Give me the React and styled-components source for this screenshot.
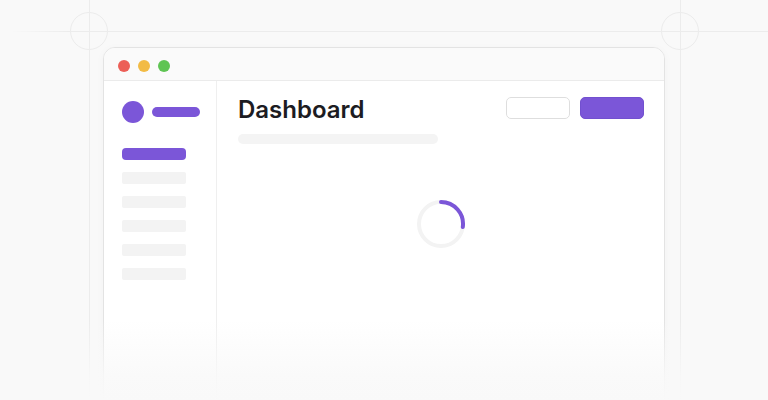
import React from 'react';
import styled, { createGlobalStyle } from 'styled-components';

const GlobalStyle = createGlobalStyle`
  html, body {
    margin: 0;
    padding: 0;
    background: #f9f9f9;
    font-family: 'Inter', 'Liberation Sans', sans-serif;
  }
`;

const Stage = styled.div`
  position: relative;
  width: 768px;
  height: 400px;
  overflow: hidden;
  background: #f9f9f9;
  padding: 47px 0 0 103px;
  box-sizing: border-box;
`;

const GuideV = styled.div`
  position: absolute;
  top: 0;
  left: ${props => props.x}px;
  width: 1px;
  height: 400px;
  background: #ececec;
`;

const GuideH = styled.div`
  position: absolute;
  top: 31px;
  left: 0;
  width: 768px;
  height: 1px;
  background: linear-gradient(to right, rgba(236, 236, 236, 0) 10px, #ececec 70px);
`;

const GuideRing = styled.div`
  position: absolute;
  top: 12px;
  left: ${props => props.x - 19}px;
  width: 38px;
  height: 38px;
  border-radius: 50%;
  border: 1px solid #ececec;
  box-sizing: border-box;
`;

const Window = styled.div`
  position: relative;
  width: 562px;
  height: 420px;
  display: flex;
  flex-direction: column;
  background: #fff;
  border: 1.5px solid #e3e3e3;
  border-radius: 12px;
  box-shadow: 0 2px 10px rgba(0, 0, 0, 0.03);
  box-sizing: border-box;
  overflow: hidden;
`;

const TitleBar = styled.div`
  height: 33px;
  display: flex;
  align-items: center;
  gap: 8px;
  padding: 4px 0 0 14px;
  box-sizing: border-box;
  background: #fafafa;
  border-bottom: 1.5px solid #ebebeb;
`;

const Dot = styled.span`
  width: 12px;
  height: 12px;
  border-radius: 50%;
  background: ${props => props.color};
`;

const Body = styled.div`
  flex: 1;
  display: flex;
`;

const Sidebar = styled.div`
  width: 113px;
  border-right: 1.5px solid #efefef;
  padding: 20px 0 0 18px;
  box-sizing: border-box;
  display: flex;
  flex-direction: column;
`;

const Brand = styled.div`
  display: flex;
  align-items: center;
  gap: 8px;
  margin-bottom: 25px;
`;

const BrandMark = styled.div`
  width: 22px;
  height: 22px;
  border-radius: 50%;
  background: #7b56d8;
`;

const BrandName = styled.div`
  width: 48px;
  height: 10px;
  border-radius: 5px;
  background: #7b56d8;
`;

const NavList = styled.div`
  display: flex;
  flex-direction: column;
  gap: 12px;
`;

const NavItem = styled.div`
  width: 64px;
  height: 12px;
  border-radius: ${props => (props.active ? '4px' : '2px')};
  background: ${props => (props.active ? '#7b56d8' : '#f3f3f3')};
`;

const Main = styled.div`
  flex: 1;
  padding: 14px 20px 0 21px;
  display: flex;
  flex-direction: column;
`;

const Header = styled.div`
  display: flex;
  justify-content: space-between;
  align-items: flex-start;
`;

const Title = styled.h1`
  margin: 0;
  font-family: 'Inter', 'Liberation Sans', sans-serif;
  font-size: 24px;
  line-height: 30px;
  font-weight: 600;
  color: #1c1c22;
`;

const Actions = styled.div`
  display: flex;
  gap: 10px;
  padding-top: 2px;
`;

const Button = styled.div`
  width: 64px;
  height: 22px;
  border-radius: 5px;
  box-sizing: border-box;
  background: ${props => (props.primary ? '#7b56d8' : '#fff')};
  border: 1px solid ${props => (props.primary ? '#7250cf' : '#dedede')};
`;

const Subtitle = styled.div`
  width: 200px;
  height: 10px;
  border-radius: 5px;
  background: #f4f4f4;
  margin-top: 9px;
`;

const SpinnerWrap = styled.div`
  display: flex;
  justify-content: center;
  margin-top: 55px;
`;

const Fade = styled.div`
  position: absolute;
  left: 0;
  right: 0;
  bottom: 0;
  height: 80px;
  background: linear-gradient(to bottom, rgba(249, 249, 249, 0) 0%, rgba(249, 249, 249, 0.85) 70%, #f9f9f9 100%);
`;

const Spinner = () => (
  <svg width="50" height="50" viewBox="0 0 50 50">
    <circle cx="25" cy="25" r="22" fill="none" stroke="#f3f3f3" strokeWidth="4" />
    <path
      d="M25 3 A22 22 0 0 1 46.8 28"
      fill="none"
      stroke="#7b56d8"
      strokeWidth="4"
      strokeLinecap="round"
    />
  </svg>
);

const App = () => (
  <>
    <GlobalStyle />
    <Stage>
      <GuideH />
      <GuideV x={89} />
      <GuideV x={680} />
      <GuideRing x={89} />
      <GuideRing x={680} />
      <Window>
        <TitleBar>
          <Dot color="#ec5f57" />
          <Dot color="#f2bb45" />
          <Dot color="#5fc453" />
        </TitleBar>
        <Body>
          <Sidebar>
            <Brand>
              <BrandMark />
              <BrandName />
            </Brand>
            <NavList>
              <NavItem active />
              <NavItem />
              <NavItem />
              <NavItem />
              <NavItem />
              <NavItem />
            </NavList>
          </Sidebar>
          <Main>
            <Header>
              <Title>Dashboard</Title>
              <Actions>
                <Button />
                <Button primary />
              </Actions>
            </Header>
            <Subtitle />
            <SpinnerWrap>
              <Spinner />
            </SpinnerWrap>
          </Main>
        </Body>
      </Window>
      <Fade />
    </Stage>
  </>
);

export default App;
